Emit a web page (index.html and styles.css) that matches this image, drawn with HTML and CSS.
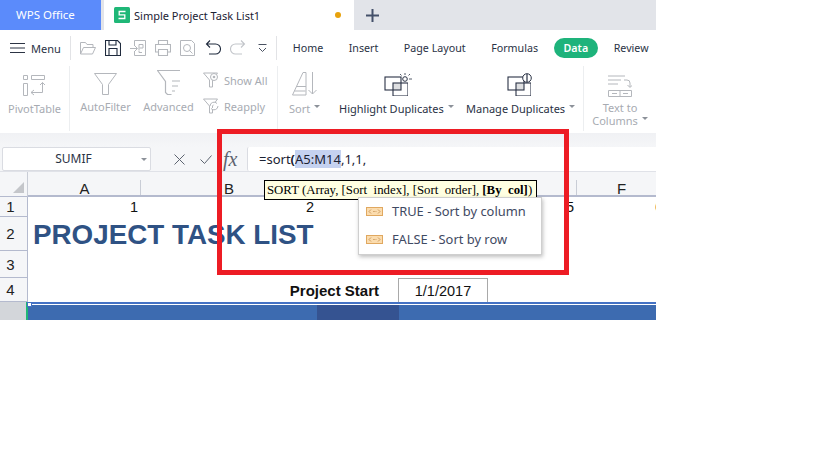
FILE: index.html
```html
<!DOCTYPE html>
<html lang="en">
<head>
<meta charset="utf-8">
<title>WPS Office</title>
<link rel="stylesheet" href="styles.css">
</head>
<body>
<div class="app">
  <div class="tabbar">
    <div class="brand">WPS Office</div>
    <div class="doc-tab">
      <svg class="sheet-logo" viewBox="0 0 16 16"><rect width="16" height="16" rx="1.5" fill="#1fb777"/><path d="M11.500 4.500H5.200v3.400h5.600v3.600H4.500" fill="none" stroke="#fff" stroke-width="1.300"/></svg>
      <span class="doc-name">Simple Project Task List1</span>
      <span class="dot"></span>
    </div>
    <div class="tab-rest">
      <svg class="plus" viewBox="0 0 13 13"><path d="M6.500 0v13M0 6.500h13" stroke="#44506a" stroke-width="2"/></svg>
    </div>
  </div>

  <div class="toolbar">
    <div class="menu">
      <svg class="menu-icon" viewBox="0 0 15 10"><path d="M0 .5h15M0 5h15M0 9.500h15" stroke="#2c3444"/></svg>
      <span>Menu</span>
    </div>
    <div class="quick">
      <svg class="qi" viewBox="0 0 16 16"><path d="M.5 14V2.500h5l1.500 2h6v3M.5 14l3-6.500h12L12.500 14z" fill="none" stroke="#b4b7bc"/></svg>
      <svg class="qi" viewBox="0 0 16 16"><path d="M.5.5h12l3 3v12H.500zM4 .5v4.500h7V.5M4 15.500V8.500h8v7" fill="none" stroke="#1f2a3d" stroke-width="1.100"/></svg>
      <svg class="qi" viewBox="0 0 16 16"><path d="M4.500 6V.5h11v15h-11V11M0 8.500h7M5 6l2.500 2.500L5 11M9 10V4.500h4V8H9.500M9 10.500v2h3" fill="none" stroke="#b4b7bc"/></svg>
      <svg class="qi" viewBox="0 0 16 16"><path d="M3.500 4.500V.5h9v4M3.500 12H.5V4.500h15V12h-3M3.500 9.500h9v6h-9z" fill="none" stroke="#b4b7bc" stroke-width="1.100"/></svg>
      <svg class="qi" viewBox="0 0 16 16"><path d="M.5.5h11l3 3v12H.5z" fill="none" stroke="#b4b7bc"/><circle cx="7" cy="8" r="3.500" fill="none" stroke="#b4b7bc"/><path d="M9.500 10.500l3 3" stroke="#b4b7bc"/></svg>
      <svg class="qi" viewBox="0 0 16 16"><path d="M5 .5L1.500 4 5 7.500M1.500 4h9a4.500 4.500 0 0 1 0 10H4" fill="none" stroke="#1f2a3d" stroke-width="1.100"/></svg>
      <svg class="qi" viewBox="0 0 16 16"><path d="M11 .5L14.500 4 11 7.500M14.500 4h-9a4.500 4.500 0 0 0 0 10H12" fill="none" stroke="#c2c5ca" stroke-width="1.100"/></svg>
      <svg class="qi-more" viewBox="0 0 9 9"><path d="M.5.5h8M1 4l3.500 3.500L8 4" fill="none" stroke="#4a5262"/></svg>
    </div>
    <nav class="tabs">
      <span class="tab">Home</span>
      <span class="tab">Insert</span>
      <span class="tab">Page Layout</span>
      <span class="tab">Formulas</span>
      <span class="tab tab-on">Data</span>
      <span class="tab">Review</span>
    </nav>
  </div>

  <div class="ribbon">
    <div class="group g-pivot">
      <div class="item">
        <svg class="i-pivot" viewBox="0 0 22 21"><path d="M.5.500h4v4h-4zM8.500.500h13v4h-13zM.5 8.500h4v12h-4zM8 17.500h11.500v-10M17 10l2.500-2.500L22 10M11 15l-3 2.500 3 2.500" fill="none" stroke="#b4b7bc"/></svg>
        <span class="lab off">PivotTable</span>
      </div>
    </div>
    <div class="group g-filter">
      <div class="item it-auto">
        <svg class="i-funnel" viewBox="0 0 23 22"><path d="M.5.500h22l-8 11v10h-6v-10z" fill="none" stroke="#b4b7bc"/></svg>
        <span class="lab off">AutoFilter</span>
      </div>
      <div class="item it-adv">
        <svg class="i-adv" viewBox="0 0 24 25"><path d="M23 .5H.5l8 11v11l2 2h4M15 11h8M15 16h6M15 21h3" fill="none" stroke="#b4b7bc" stroke-width="1.200"/></svg>
        <span class="lab off">Advanced</span>
      </div>
      <div class="stack">
        <div class="mini">
          <svg class="i-mini" viewBox="0 0 16 16"><path d="M.5 1h14L9.500 8v7h-3V8z" fill="none" stroke="#b4b7bc"/><circle cx="11" cy="5" r="3.500" fill="#fff" stroke="#b4b7bc"/><circle cx="11" cy="5" r="1.300" fill="#b4b7bc"/></svg>
          <span class="lab off">Show All</span>
        </div>
        <div class="mini">
          <svg class="i-mini" viewBox="0 0 16 16"><path d="M.5 1h14L9.500 8v7h-3V8z" fill="none" stroke="#b4b7bc"/><path d="M7 8a4 4 0 0 1 7-2.500M15 8a4 4 0 0 1-7 2.500" fill="#fff" stroke="#b4b7bc"/></svg>
          <span class="lab off">Reapply</span>
        </div>
      </div>
    </div>
    <div class="group g-sort">
      <div class="item">
        <svg class="i-sort" viewBox="0 0 25 25"><path d="M.5 24L11 1.500h3V24H.5zM5 15.500h9M2.500 20h11" fill="none" stroke="#b4b7bc"/><path d="M20.500 1v22M16.500 19l4 4 4-4" fill="none" stroke="#b4b7bc"/></svg>
        <span class="lab off">Sort<i class="caret"></i></span>
      </div>
    </div>
    <div class="group g-dup">
      <div class="item it-high">
        <svg class="i-dup" viewBox="0 0 24 24"><rect x="9" y="11" width="8" height="7" fill="#dedfe1"/><rect x="1" y="5" width="16" height="13" fill="none" stroke="#2a3245" stroke-width="1.100"/><rect x="9" y="11" width="15" height="13" fill="none" stroke="#2a3245" stroke-width="1.100"/></svg>
        <svg class="i-spark" viewBox="0 0 12 11"><circle cx="5" cy="6" r="2.300" fill="none" stroke="#2a3245"/><path d="M5 0v2M0 1l1.500 1.500M10 1L8.500 2.500M9 6h3" stroke="#2a3245" stroke-width=".8"/></svg>
        <span class="lab on">Highlight Duplicates<i class="caret"></i></span>
      </div>
      <div class="item it-manage">
        <svg class="i-dup" viewBox="0 0 24 24"><rect x="9" y="11" width="8" height="7" fill="#dedfe1"/><rect x="1" y="5" width="16" height="13" fill="none" stroke="#2a3245" stroke-width="1.100"/><rect x="9" y="11" width="15" height="13" fill="none" stroke="#2a3245" stroke-width="1.100"/></svg>
        <svg class="i-warn" viewBox="0 0 10 10"><circle cx="5" cy="5" r="4.300" fill="#fff" stroke="#2a3245"/><path d="M5 1v8" stroke="#2a3245" stroke-width="1.200"/></svg>
        <span class="lab on">Manage Duplicates<i class="caret"></i></span>
      </div>
    </div>
    <div class="group g-text">
      <div class="item">
        <svg class="i-text" viewBox="0 0 24 22"><path d="M0 1h17M0 5h13M0 9h10M16 5h3a3 3 0 0 1 3 3v4M19.500 10l2.500 2.500 2.500-2.500" fill="none" stroke="#b4b7bc"/><path d="M.5 15.500h23v6H.5zM12 15.500v6M4 18.500h5M15 18.500h5" fill="none" stroke="#b4b7bc"/></svg>
        <span class="lab off two">Text to<br>Columns<i class="caret"></i></span>
      </div>
    </div>
  </div>

  <div class="band"></div>

  <div class="formula">
    <div class="namebox"><span>SUMIF</span><i class="caret nb"></i></div>
    <div class="f-actions">
      <svg class="f-x" viewBox="0 0 11 11"><path d="M.5.5l10 10M10.500.5l-10 10" stroke="#5d6470"/></svg>
      <svg class="f-ok" viewBox="0 0 12 9"><path d="M.5 4.500L4.500 8.500l7-8" fill="none" stroke="#5d6470"/></svg>
      <span class="fx">fx</span>
    </div>
    <div class="f-input">=sort<b class="paren">(</b><span class="hl">A5:M14</span>,1,1,</div>
  </div>

  <div class="sheet">
    <div class="corner"><span class="tri"></span></div>
    <div class="ch">A</div>
    <div class="ch">B</div>
    <div class="ch"></div>
    <div class="ch"></div>
    <div class="ch"></div>
    <div class="ch ch-f">F</div>

    <div class="rh">1</div>
    <div class="num">1</div><div class="num">2</div><div class="num"></div><div class="num"></div><div class="num">5</div><div class="num">6</div>

    <div class="rh">2</div>
    <div class="title">PROJECT TASK LIST</div>

    <div class="rh">3</div>
    <div class="blank"></div>

    <div class="rh">4</div>
    <div class="start-label">Project Start</div>
    <div class="start-date">1/1/2017</div>
    <div class="rest4"></div>

    <div class="rh rh5"></div>
    <div class="bar bar-ab"><span class="handle"></span></div>
    <div class="bar bar-c"></div>
    <div class="bar bar-rest"></div>
  </div>

  <div class="tip">SORT (Array, [Sort<span class="us">_</span>index], [Sort<span class="us">_</span>order], <b>[By<span class="us">_</span>col]</b>)</div>
  <div class="popup">
    <div class="pop-row"><svg class="pop-ic" viewBox="0 0 17 9"><rect x=".5" y=".5" width="16" height="8" fill="#fbdcae" stroke="#e0a860"/><path d="M5 2.500L3 4.500l2 2M12 2.500l2 2-2 2M7 4.500h.8M8.300 4.500h.8M9.600 4.500h.8" fill="none" stroke="#b9803c" stroke-width=".7"/></svg><span>TRUE - Sort by column</span></div>
    <div class="pop-row"><svg class="pop-ic" viewBox="0 0 17 9"><rect x=".5" y=".5" width="16" height="8" fill="#fbdcae" stroke="#e0a860"/><path d="M5 2.500L3 4.500l2 2M12 2.500l2 2-2 2M7 4.500h.8M8.300 4.500h.8M9.600 4.500h.8" fill="none" stroke="#b9803c" stroke-width=".7"/></svg><span>FALSE - Sort by row</span></div>
  </div>
  <div class="redbox"></div>
</div>
</body>
</html>
```

FILE: styles.css
```css
html, body { margin: 0; padding: 0; background: #fff; }
.app {
  position: relative;
  width: 656px;
  height: 320px;
  overflow: hidden;
  background: #fff;
  font-family: "Noto Sans", "Open Sans", sans-serif;
  font-size: 11px;
  color: #2a3245;
}
svg { display: block; flex: none; }

/* tab bar */
.tabbar { display: flex; height: 30px; }
.brand {
  width: 101px; background: #5b8bfb; color: #fff;
  font-size: 11.500px; line-height: 30px; padding-left: 16px; box-sizing: border-box;
}
.doc-tab {
  width: 250px; margin-left: 3px; box-shadow: -3px 0 0 #e2e4e9;
  display: flex; align-items: center; padding-left: 10px; box-sizing: border-box;
  font-size: 11px; color: #1b2233;
}
.sheet-logo { width: 16px; height: 16px; margin-right: 4px; }
.doc-name { flex: 1; white-space: nowrap; }
.dot { width: 6px; height: 6px; border-radius: 50%; background: #e8a20c; margin-right: 13px; }
.tab-rest { flex: 1; background: #e2e4e9; display: flex; align-items: center; padding-left: 12px; }
.plus { width: 13px; height: 13px; }

/* toolbar */
.toolbar { display: flex; align-items: center; height: 36px; }
.menu { flex: none; width: 71px; height: 24px; box-sizing: border-box; display: flex; align-items: center; padding-left: 10px; gap: 6px; border-right: 1px solid #e2e3e6; color: #2a3245; }
.menu-icon { width: 15px; height: 10px; }
.quick { flex: none; display: flex; align-items: center; gap: 9px; width: 206px; height: 24px; box-sizing: border-box; padding-left: 9px; border-right: 1px solid #e2e3e6; }
.qi { width: 16px; height: 16px; }
.qi-more { width: 9px; height: 9px; margin-left: 3px; }
.tabs { flex: none; display: flex; align-items: center; padding-left: 3px; font-size: 10.700px; }
.tab { padding: 0 12.750px; line-height: 20px; white-space: nowrap; color: #2a3245; }
.tab-on { background: #1eb37b; color: #fff; font-weight: 600; border-radius: 10px; padding: 0 9.500px; margin: 0 3.250px; }

/* ribbon */
.ribbon { display: flex; height: 67px; }
.group { flex: none; height: 65px; box-sizing: border-box; border-right: 1px solid #eceef0; display: flex; position: relative; }
.item { position: relative; display: flex; flex-direction: column; align-items: center; }
.lab { white-space: nowrap; line-height: 15px; }
.off { color: #a7abb2; }
.on { color: #2a3245; }
.caret { display: inline-block; width: 0; height: 0; border: 3px solid transparent; border-top: 3px solid #8c9199; border-bottom: 0; margin-left: 4px; vertical-align: 5px; }
.g-pivot { width: 70px; justify-content: center; }
.i-pivot { width: 22px; height: 21px; margin-top: 9px; margin-bottom: 5px; }
.g-filter { width: 208px; padding-left: 10px; }
.it-auto { width: 51px; }
.i-funnel { width: 23px; height: 22px; margin-top: 7px; margin-bottom: 4px; }
.it-adv { width: 51px; margin-left: 12px; }
.i-adv { width: 24px; height: 25px; margin-top: 4px; margin-bottom: 4px; }
.stack { margin-left: 9px; }
.mini { display: flex; align-items: center; gap: 5px; height: 16px; }
.mini:first-child { margin-top: 6px; }
.mini + .mini { margin-top: 10px; }
.i-mini { width: 16px; height: 16px; }
.g-sort { width: 52px; padding-left: 11px; border-right: 0; }
.i-sort { width: 25px; height: 25px; margin-top: 5px; margin-bottom: 5px; }
.g-dup { width: 254px; padding-left: 9px; border-right: 1px solid #eceef0; }
.it-high { width: 127px; align-items: flex-start; }
.it-manage { align-items: flex-start; }
.i-dup { width: 24px; height: 24px; margin-top: 6px; margin-bottom: 5px; }
.it-high .i-dup { margin-left: 45px; }
.it-manage .i-dup { margin-left: 41px; }
.i-spark { position: absolute; left: 61px; top: 7px; width: 12px; height: 11px; }
.i-warn { position: absolute; left: 56px; top: 7px; width: 10px; height: 10px; }
.g-text { border-right: 0; width: 72px; justify-content: center; }
.i-text { width: 24px; height: 22px; margin-top: 9px; margin-bottom: 4px; }
.two { text-align: center; line-height: 13px; display: block; }

/* band + formula */
.band { height: 14px; background: linear-gradient(#f0f1f4, #f5f6f8); }
.formula { display: flex; height: 25px; background: #f5f6f8; box-sizing: border-box; border-bottom: 1px solid #e0e2e8; }
.namebox {
  flex: none; width: 149px; margin-left: 2px; height: 24px; box-sizing: border-box; background: #fff;
  border: 1px solid #dadce2; border-radius: 2px; position: relative; text-align: center;
  line-height: 22px; font-size: 12px; color: #2a3245;
}
.namebox span { margin-right: 6px; }
.caret.nb { position: absolute; right: 3px; top: 10px; margin: 0; }
.f-actions { flex: none; width: 96px; display: flex; align-items: center; }
.f-x { width: 11px; height: 11px; margin-left: 23px; }
.f-ok { width: 12px; height: 9px; margin-left: 15px; }
.fx { font-family: "Liberation Serif", serif; font-style: italic; font-size: 20px; color: #5d6470; margin-left: 11px; }
.f-input { flex: 1; background: #fff; font-size: 13px; line-height: 24px; padding-left: 11px; border-left: 1px solid #dadce2; color: #1b2233; white-space: nowrap; border-radius: 2px 0 0 2px; }
.paren { font-weight: 700; }
.hl { background: #c5d2f0; }

/* sheet */
.sheet {
  display: grid;
  grid-template-columns: 28px 113px 176px 82px 89px 89px 89px;
  grid-template-rows: 25px 20px 34px 27px 24px 18px;
  font-family: "Liberation Sans", Arial, sans-serif;
  color: #111;
  height: 148px;
  overflow: hidden;
}
.corner { background: #f5f6f8; border-bottom: 1px solid #b4bace; border-right: 1px solid #c9cdd6; box-sizing: border-box; position: relative; }
.tri { position: absolute; right: 3px; bottom: 3px; width: 0; height: 0; border-style: solid; border-width: 0 0 11px 11px; border-color: transparent transparent #c4c6ca transparent; }
.ch { background: #f5f6f8; border-bottom: 2px solid #b4bace; box-sizing: border-box; text-align: center; font-size: 15px; position: relative; padding-top: 8px; line-height: 17px; color: #222; }
.ch::after { content: ""; position: absolute; right: 0; top: 8px; bottom: 0; width: 1px; background: #c9cdd6; }
.ch-f::after { display: none; }
.rh { background: #f5f6f8; border-right: 1px solid #b4bace; border-bottom: 1px solid #b4bace; box-sizing: border-box; font-size: 15px; display: flex; align-items: center; justify-content: center; color: #222; padding-right: 6px; }
.rh5 { background: #d3d6da; border-right: 2px solid #1fb777; border-bottom: 0; }
.num { font-size: 14.500px; line-height: 21px; text-align: right; padding-right: 3px; }
.title { grid-column: 2 / -1; font-weight: 700; font-size: 27.800px; line-height: 35px; color: #2f5284; padding-left: 5px; white-space: nowrap; }
.blank { grid-column: 2 / -1; }
.start-label { grid-column: 2 / 5; font-weight: 700; font-size: 15px; line-height: 26px; text-align: right; padding-right: 20px; }
.start-date { font-size: 14.500px; line-height: 24px; text-align: center; border: 1px solid #a9a9a9; border-bottom: 0; box-sizing: border-box; height: 24px; margin-left: -1px; }
.rest4 { grid-column: 6 / -1; }
.bar { background: #3d6bb0; border-top: 2px solid #4472c4; box-shadow: inset 0 1px 0 #fff; }
.bar-ab { grid-column: 2 / 4; position: relative; }
.bar-c { background: #355391; }
.bar-rest { grid-column: 5 / -1; }
.handle { position: absolute; left: -1px; top: -2px; width: 3px; height: 3px; background: #fff; border: 1px solid #4472c4; }

/* overlays */
.tip {
  position: absolute; left: 264px; top: 180px; width: 273px; height: 20px; box-sizing: border-box;
  background: #ffffe1; border: 1px solid #000; font-family: "Liberation Serif", serif;
  font-size: 12.800px; line-height: 17px; padding: 1px 2px 0; color: #000; white-space: nowrap; overflow: hidden;
}
.us { color: transparent; }
.popup {
  position: absolute; left: 358px; top: 197px; width: 184px; height: 58px; box-sizing: border-box;
  background: #fff; border: 1px solid #cfcfcf; box-shadow: 1px 2px 4px rgba(0,0,0,.25);
  font-size: 12.900px; color: #3f4a63;
}
.pop-row { display: flex; align-items: center; height: 28px; box-sizing: border-box; padding: 0 0 2px 7px; gap: 9px; white-space: nowrap; }
.pop-ic { width: 17px; height: 9px; }
.redbox { position: absolute; left: 217px; top: 129px; width: 352px; height: 146px; box-sizing: border-box; border: 5px solid #ed1c24; }
```
